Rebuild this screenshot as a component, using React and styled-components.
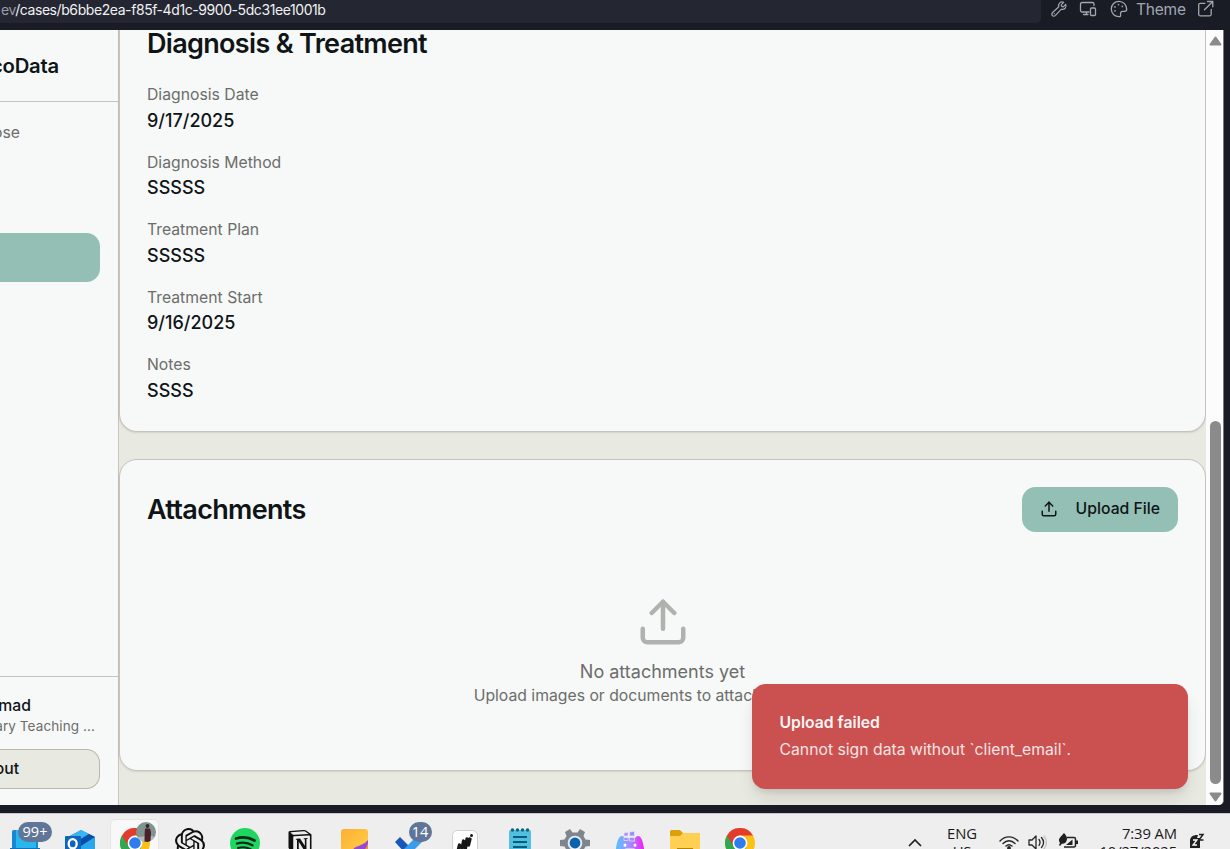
import React from "react";
import styled, { createGlobalStyle } from "styled-components";
import { Upload } from "lucide-react";
import { SiOpenai, SiNotion } from "react-icons/si";

const GlobalStyle = createGlobalStyle`
  * { box-sizing: border-box; }
  html, body { margin: 0; padding: 0; overflow: hidden; }
  body { font-family: Inter, "Liberation Sans", sans-serif; color: #0f1417; }
  svg { display: block; flex: none; }
`;

const Screen = styled.div`
  width: 1230px;
  height: 849px;
  display: flex;
  flex-direction: column;
  overflow: hidden;
  background: #191c25;
`;

/* Browser chrome */
const TopBar = styled.header`
  height: 30px;
  flex: none;
  display: flex;
  align-items: flex-start;
  color: #a2a6b1;
`;
const Address = styled.div`
  width: 1041px;
  height: 23px;
  background: #242731;
  border-bottom-right-radius: 5px;
  padding-left: 1px;
  font-size: 14px;
  line-height: 20px;
  letter-spacing: -0.42px;
  color: #f0f1f4;
  white-space: nowrap;
  span { color: #9a9da7; }
`;
const Tools = styled.div`
  display: flex;
  align-items: center;
  height: 18px;
  padding-left: 9px;
`;
const ToolIcon = styled.span`
  width: 18px;
  height: 18px;
  margin-right: ${(p) => p.$gap}px;
`;
const ThemeLabel = styled.span`
  width: 50px;
  margin: 2px 11px 0 -1px;
  font-size: 15.5px;
  letter-spacing: -0.2px;
  line-height: 18px;
  white-space: nowrap;
`;

/* Page */
const Page = styled.div`
  height: 775px;
  width: 1224px;
  flex: none;
  display: flex;
  overflow: hidden;
  background: #e8e9e0;
  border-right: 1px solid #767981;
  border-bottom-right-radius: 5px;
`;
const Sidebar = styled.aside`
  width: 119px;
  flex: none;
  display: flex;
  flex-direction: column;
  background: #f7f9f8;
  border-right: 1px solid #c8c3bd;
  overflow: hidden;
`;
const Clipped = styled.div`
  display: flex;
  justify-content: flex-end;
  width: ${(p) => p.$end}px;
  white-space: nowrap;
`;
const Brand = styled.div`
  height: 72px;
  flex: none;
  display: flex;
  align-items: center;
  border-bottom: 1px solid #c8c3bd;
  font-size: 20.25px;
  font-weight: 600;
  letter-spacing: -0.2px;
`;
const Nav = styled.nav`
  flex: 1;
  padding-top: 20px;
  font-size: 15.75px;
  line-height: 22.5px;
  color: #6c6d6a;
`;
const ActiveItem = styled.div`
  width: 100px;
  height: 49px;
  margin-top: 88.5px;
  background: #93bfb4;
  border-radius: 0 13.5px 13.5px 0;
`;
const Account = styled.div`
  height: 129px;
  flex: none;
  border-top: 1px solid #c8c3bd;
  padding-top: 18px;
`;
const UserName = styled.div`
  font-size: 15.75px;
  font-weight: 500;
  line-height: 22px;
`;
const UserOrg = styled.div`
  font-size: 13.5px;
  line-height: 18px;
  color: #6c6d6a;
  letter-spacing: 0.1px;
`;
const LogoutButton = styled.div`
  width: 100px;
  height: 40px;
  margin-top: 14px;
  padding-bottom: 2px;
  display: flex;
  align-items: center;
  background: #e8e9e0;
  border: 1px solid #bbb5ac;
  border-left: 0;
  border-radius: 0 13.5px 13.5px 0;
  font-size: 15.75px;
  font-weight: 500;
`;
const Main = styled.main`
  width: 1087px;
  flex: none;
  display: flex;
  flex-direction: column;
  gap: 27px;
`;
const Card = styled.section`
  background: #f7f9f8;
  border: 1px solid #c8c3bd;
  border-radius: 18px;
  padding: 27px;
  box-shadow: 0 1px 2px rgba(0, 0, 0, 0.1);
`;
const DiagnosisCard = styled(Card)`
  height: 402px;
  padding-top: 0;
  border-top: 0;
  border-top-left-radius: 0;
  border-top-right-radius: 0;
`;
const AttachmentsCard = styled(Card)`
  height: 312px;
`;
const Title = styled.h2`
  margin: 0;
  font-size: 27px;
  font-weight: 600;
  line-height: 27px;
  letter-spacing: -0.675px;
`;
const Fields = styled.div`
  display: flex;
  flex-direction: column;
  gap: 18px;
  margin-top: 27px;
`;
const FieldLabel = styled.div`
  font-size: 15.75px;
  line-height: 22.5px;
  color: #6c6d6a;
`;
const FieldValue = styled.div`
  font-size: 18px;
  font-weight: 500;
  line-height: 27px;
`;
const CardHeader = styled.div`
  display: flex;
  align-items: center;
  justify-content: space-between;
`;
const UploadButton = styled.button`
  width: 156px;
  height: 45px;
  border: 0;
  border-radius: 13.5px;
  padding: 0 18px;
  display: flex;
  align-items: center;
  justify-content: space-between;
  background: #93bfb4;
  color: #0f1417;
  font: 500 15.75px/22.5px Inter, sans-serif;
  white-space: nowrap;
  svg { margin-bottom: 1px; }
`;
const Empty = styled.div`
  display: flex;
  flex-direction: column;
  align-items: center;
  padding-top: 63px;
  color: #6c6d6a;
  svg { opacity: 0.5; margin-bottom: 9px; }
`;
const EmptyTitle = styled.div`
  font-size: 18px;
  line-height: 27px;
`;
const EmptyText = styled.div`
  font-size: 15.75px;
  line-height: 22.5px;
  white-space: nowrap;
`;
const ScrollBar = styled.div`
  width: 17px;
  flex: none;
  display: flex;
  flex-direction: column;
  align-items: center;
  background: #fcfcfc;
  padding: 6px 0 3px 2px;
`;
const Thumb = styled.div`
  width: 11px;
  height: 363px;
  margin: auto 0 8px;
  border-radius: 6px;
  background: #8b8b8b;
`;
const Toast = styled.div`
  position: absolute;
  left: 752px;
  top: 684px;
  width: 436px;
  height: 105px;
  padding: 28px 27.5px 27px;
  border-radius: 13.5px;
  background: #ca5150;
  color: #fbf5f4;
  font-size: 15.75px;
  line-height: 22.5px;
  box-shadow: 0 10px 18px -3px rgba(0, 0, 0, 0.12), 0 4px 7px -3px rgba(0, 0, 0, 0.12);
`;
const ToastTitle = styled.div`
  font-weight: 600;
  margin-bottom: 4.5px;
`;
const ToastText = styled.div`
  color: #f6e4e3;
`;

/* Desktop taskbar */
const Taskbar = styled.footer`
  height: 36px;
  margin-top: 8px;
  flex: none;
  display: flex;
  overflow: hidden;
  background: #eeeeee;
  border-top: 1px solid #c5c7ca;
  font-family: "Open Sans", "Noto Sans", sans-serif;
  color: #1b1b1b;
`;
const Apps = styled.div`
  display: flex;
  margin-left: -2.5px;
  width: 780px;
  flex: none;
`;
const AppCell = styled.div`
  position: relative;
  width: 55px;
  height: 50px;
  flex: none;
  padding: 14px 0 0 12.5px;
`;
const NotionCell = styled(AppCell)`
  padding: 16px 0 0 15.5px;
`;
const ActiveTile = styled(AppCell)`
  width: 49px;
  margin: 5px 4px 0 2px;
  padding: 8px 0 0 9.5px;
  background: #f8f8f8;
  border: 1px solid #e4e4e4;
  border-radius: 5px;
`;
const Badge = styled.span`
  position: absolute;
  left: ${(p) => p.$x}px;
  top: 8px;
  width: ${(p) => p.$w}px;
  height: 20px;
  border-radius: 10px;
  background: #5f7699;
  color: #fff;
  font-size: 14.5px;
  line-height: 20px;
  text-align: center;
`;
const Avatar = styled.span`
  position: absolute;
  left: 25px;
  top: 2px;
`;
const Tray = styled.div`
  display: flex;
  flex: 1;
  justify-content: flex-end;
  padding-right: 25px;
`;
const TrayIcon = styled.span`
  width: ${(p) => p.$w}px;
  margin-right: ${(p) => p.$gap}px;
  padding-top: 19px;
`;
const TrayText = styled.div`
  width: ${(p) => p.$w}px;
  margin-right: ${(p) => p.$gap}px;
  padding-top: 10px;
  font-size: 14.8px;
  line-height: 18px;
  letter-spacing: -0.1px;
  text-align: ${(p) => p.$align || "right"};
  white-space: nowrap;
`;

const Line = ({ children, width = 1.3 }) => (
  <svg width="18" height="18" viewBox="0 0 18 18" fill="none" stroke="currentColor" strokeWidth={width} strokeLinecap="round" strokeLinejoin="round">
    {children}
  </svg>
);

const Chrome = () => (
  <svg width="30" height="30" viewBox="0 0 30 30">
    <circle cx="15" cy="15" r="15" fill="#fbc116" />
    <path d="M15 15 2 7.5A15 15 0 0 0 15 30l6.5-11.2Z" fill="#2da94f" />
    <path d="M2 7.5A15 15 0 0 1 28 7.5H15l-6.5 11.2Z" fill="#e33b2e" />
    <circle cx="15" cy="15" r="7.4" fill="#fff" />
    <circle cx="15" cy="15" r="5.8" fill="#2f7cec" />
  </svg>
);
const Icon30 = ({ children }) => (
  <svg width="30" height="30" viewBox="0 0 30 30">{children}</svg>
);

const fields = [
  ["Diagnosis Date", "9/17/2025"],
  ["Diagnosis Method", "SSSSS"],
  ["Treatment Plan", "SSSSS"],
  ["Treatment Start", "9/16/2025"],
  ["Notes", "SSSS"],
];

export default function App() {
  return (
    <Screen>
      <GlobalStyle />
      <TopBar>
        <Address><span>ev</span>/cases/b6bbe2ea-f85f-4d1c-9900-5dc31ee1001b</Address>
        <Tools>
          <ToolIcon $gap={11}>
            <Line width={1.2}><path d="M15.700 4.300 13.200 6.800l-1.600-.400-.400-1.600 2.500-2.500C10.700 1 7.800 3.600 8.800 6.700L2.600 12.500c-2.200 2.200.700 5.100 2.900 2.900l5.800-6.200c3.100 1 5.700-1.900 4.400-4.900ZM4.300 13.700v0" /></Line>
          </ToolIcon>
          <ToolIcon $gap={13}>
            <Line><path d="M10 12H3a1.500 1.500 0 0 1-1.500-1.500V4A1.500 1.500 0 0 1 3 2.500h10.500A1.500 1.500 0 0 1 15 4v1.500M7.500 12v2.500M4.500 14.500H9" /><rect x="11.500" y="8" width="5" height="7.500" rx="1" /></Line>
          </ToolIcon>
          <ToolIcon $gap={9}>
            <Line><path d="M9 1.300a7.700 7.700 0 1 0 0 15.400c1.200 0 1.900-.700 1.600-1.800-.4-2 .3-3.600 2.100-3.600h2.100c1.200 0 1.900-.7 1.900-2.100 0-4.300-3.500-7.900-7.700-7.900Z" /><path d="M5 6.800v.1M8.500 4.500v.1M12.300 6.300v.1M5 10.800v.1" strokeWidth="1.700" /></Line>
          </ToolIcon>
          <ThemeLabel>Theme</ThemeLabel>
          <ToolIcon $gap={0}>
            <Line><path d="M8 3.300H3.200A1.500 1.500 0 0 0 1.700 4.800v9.500a1.500 1.500 0 0 0 1.500 1.500h9.500a1.500 1.500 0 0 0 1.500-1.500V9.500M10.500 1.500h5.300v5.300M15.500 1.800 7.500 9.800" /></Line>
          </ToolIcon>
        </Tools>
      </TopBar>

      <Page>
        <Sidebar>
          <Brand><Clipped $end={59}>coData</Clipped></Brand>
          <Nav>
            <Clipped $end={20}>ose</Clipped>
            <ActiveItem />
          </Nav>
          <Account>
            <UserName><Clipped $end={31}>mad</Clipped></UserName>
            <UserOrg><Clipped $end={95}>ary Teaching ...</Clipped></UserOrg>
            <LogoutButton><Clipped $end={19}>out</Clipped></LogoutButton>
          </Account>
        </Sidebar>
        <Main>
          <DiagnosisCard>
            <Title>Diagnosis &amp; Treatment</Title>
            <Fields>
              {fields.map(([label, value]) => (
                <div key={label}>
                  <FieldLabel>{label}</FieldLabel>
                  <FieldValue>{value}</FieldValue>
                </div>
              ))}
            </Fields>
          </DiagnosisCard>
          <AttachmentsCard>
            <CardHeader>
              <Title>Attachments</Title>
              <UploadButton><Upload size={18} strokeWidth={2} />Upload File</UploadButton>
            </CardHeader>
            <Empty>
              <Upload size={54} strokeWidth={2} />
              <EmptyTitle>No attachments yet</EmptyTitle>
              <EmptyText>Upload images or documents to attach to this case</EmptyText>
            </Empty>
          </AttachmentsCard>
        </Main>
        <ScrollBar>
          <svg width="13" height="10" viewBox="0 0 13 10"><path d="M6.500 1.500 11.500 8.500h-10Z" fill="#8b8b8b" stroke="#8b8b8b" strokeWidth="2" strokeLinejoin="round" /></svg>
          <Thumb />
          <svg width="13" height="10" viewBox="0 0 13 10"><path d="M6.500 8.500 11.500 1.500h-10Z" fill="#8b8b8b" stroke="#8b8b8b" strokeWidth="2" strokeLinejoin="round" /></svg>
        </ScrollBar>
      </Page>

      <Toast>
        <ToastTitle>Upload failed</ToastTitle>
        <ToastText>Cannot sign data without `client_email`.</ToastText>
      </Toast>

      <Taskbar>
        <Apps>
          <AppCell>
            <Icon30><rect x="2" y="2" width="26" height="19" rx="1.500" fill="#1689d4" /><rect x="6" y="2" width="20" height="19" fill="#29b5ed" /><path d="M0 20h30v8H0Z" fill="#1572b6" /></Icon30>
            <Badge $x={20.5} $w={34}>99+</Badge>
          </AppCell>
          <AppCell>
            <Icon30>
              <path d="M3 9 16 2l14 7v21H3Z" fill="#1b78d0" /><path d="M3 9 16 2l8 4L11 14Z" fill="#38b5f1" /><path d="m11 14 13-8 6 3-14 9Z" fill="#0b4daa" /><path d="m16 18 14-9v21H16Z" fill="#28a8ea" />
              <rect y="8" width="16" height="17" rx="1" fill="#0d65bd" /><ellipse cx="7.700" cy="15.800" rx="4" ry="4.700" fill="none" stroke="#fff" strokeWidth="2.300" />
            </Icon30>
          </AppCell>
          <ActiveTile>
            <Chrome />
            <Avatar>
              <svg width="20" height="20" viewBox="0 0 20 20"><circle cx="10" cy="10" r="10" fill="#80958f" /><path d="M1.500 15a10 10 0 0 0 17 0l-3-1Z" fill="#b5bab5" /><circle cx="11.500" cy="4" r="1.900" fill="#35262a" /><path d="M9 6.500h5l1 4-.500 8.500-3 1-3-.500.200-9Z" fill="#4b202b" /></svg>
            </Avatar>
          </ActiveTile>
          <AppCell><SiOpenai size={30} color="#101010" /></AppCell>
          <AppCell>
            <Icon30><circle cx="15" cy="15" r="15" fill="#1fd660" /><g fill="none" stroke="#10291a" strokeLinecap="round"><path d="M6 10.500c6-1.800 13-1.200 18.500 2" strokeWidth="2.700" /><path d="M7 15.500c5-1.500 11-.900 15.500 1.800" strokeWidth="2.300" /><path d="M8 20c4-1.200 9-.700 13 1.500" strokeWidth="2" /></g></Icon30>
          </AppCell>
          <NotionCell><SiNotion size={24} color="#111" /></NotionCell>
          <AppCell>
            <Icon30><defs><linearGradient id="sheet" x2="1" y2="1"><stop stopColor="#ffad32" /><stop offset="1" stopColor="#ffd54a" /></linearGradient></defs><rect x="1" y="1" width="27" height="28" rx="3" fill="url(#sheet)" /><path d="M28 12c-3 4-8 5-12 7-3 1-4 4-5 8h17Z" fill="#934bd0" /><path d="M22 25c3-4 6-7 6-11v14h-7Z" fill="#fa8e48" /></Icon30>
          </AppCell>
          <AppCell>
            <Icon30><path d="m0 14 5-5 11 11-6 5Z" fill="#1856b8" /><path d="m8 22 16-16 6 5-20 20Z" fill="#3b9eed" /></Icon30>
            <Badge $x={26} $w={23}>14</Badge>
          </AppCell>
          <AppCell>
            <Icon30><rect x="2.500" y="2.500" width="25" height="27" rx="5" fill="#fff" stroke="#cfcfcf" /><g fill="none" stroke="#181818" strokeWidth="3.300" strokeLinecap="round"><path d="m8.500 21 1-4M12 21l1.500-8M15.500 20l1.500-9M18.500 17l1.500-6" /></g><circle cx="21.500" cy="7.500" r="1.500" fill="#181818" /></Icon30>
          </AppCell>
          <AppCell>
            <Icon30><rect x="4" y="2" width="22" height="27" rx="1.500" fill="#52bfdf" /><path d="M8 9h14M8 14h14M8 19h14" stroke="#075c7c" strokeWidth="2" /><path d="M7.500 2v0M12.500 2v0M17.500 2v0M22.500 2v0" stroke="#11647e" strokeWidth="3.500" strokeLinecap="round" /></Icon30>
          </AppCell>
          <AppCell>
            <Icon30><path d="m10 1 2.500 3.500h5L20 1l5 3-1.500 4 2 3.500 4.500.500v6l-4.500.500-2 3.500 1.500 4-5 3-2.500-3.500h-5L10 29l-5-3 1.500-4-2-3.500L0 18v-6l4.500-.500 2-3.500L5 4Z" fill="#7e858e" /><circle cx="15" cy="15" r="7.300" fill="#e9edef" /><circle cx="15" cy="15" r="5.400" fill="#0862ae" /></Icon30>
          </AppCell>
          <AppCell>
            <Icon30><defs><linearGradient id="pad"><stop stopColor="#51c5ff" /><stop offset=".5" stopColor="#a88bff" /><stop offset="1" stopColor="#f318ef" /></linearGradient></defs><path d="M0 30C1 16 3 8 7 8c2 0 2 2 4 2h8c2 0 2-2 4-2 4 0 6 8 7 22Z" fill="url(#pad)" /><path d="m9 5 4-.700V8H9ZM14.500 4l5-.700V8h-5ZM9 9.500h4v3H9ZM14.500 9.500h5v3.800l-5-.500Z" fill="#9c8ff8" stroke="#e9e5ff" strokeWidth=".7" /><path d="M10 17v.2M20 17v.2M11 22h8" stroke="#fff" strokeWidth="3" strokeLinecap="round" /></Icon30>
          </AppCell>
          <AppCell>
            <Icon30><path d="M0 3.500A1.500 1.500 0 0 1 1.500 2H10l3 3h17v5H0Z" fill="#dda00d" /><path d="M0 8h10l3-3h17v25H0Z" fill="#ffd052" /><path d="M7 20h16v8H7Z" fill="#b88408" /></Icon30>
          </AppCell>
          <AppCell><Chrome /></AppCell>
        </Apps>
        <Tray>
          <TrayIcon $w={14} $gap={24}><svg width="14" height="18" viewBox="0 0 14 18" fill="none" stroke="#202020" strokeWidth="1.700"><path d="m1 13 6-6 6 6" /></svg></TrayIcon>
          <TrayText $w={32} $gap={21} $align="center">ENG<br />US</TrayText>
          <TrayIcon $w={20} $gap={9}><svg width="20" height="18" viewBox="0 0 20 18" fill="none" stroke="#252525" strokeWidth="1.400" strokeLinecap="round"><path d="M1 8c5-5.500 13-5.500 18 0M4 10.500c3.500-3.700 8.500-3.700 12 0M7 13c2-1.800 4-1.800 6 0" /><circle cx="10" cy="15" r="1.200" fill="#252525" /></svg></TrayIcon>
          <TrayIcon $w={20} $gap={10}><svg width="20" height="18" viewBox="0 0 20 18" fill="none" stroke="#252525" strokeWidth="1.300" strokeLinejoin="round" strokeLinecap="round"><path d="M1 7h3l4-4v13l-4-4H1ZM11 6.500c1.200 1.500 1.200 4 0 6M13.500 4.500c2.500 3 2.500 7 0 10" /><path d="M16 3c3 4 3 9 0 13" stroke="#c3c3c3" /></svg></TrayIcon>
          <TrayIcon $w={20} $gap={21}><svg width="20" height="18" viewBox="0 0 20 18"><path d="M9 4.500h7a1.500 1.500 0 0 1 1.500 1.500v6.500A1.500 1.500 0 0 1 16 14H6" fill="none" stroke="#202020" strokeWidth="1.500" /><path d="M18 7.500h2v3.500h-2ZM14.500 6.500V12H8ZM6 0c3 3 4 6 2 9-1 1.700-3 2-4 1.500L2 13l-1-1 1-2C-1 6 3 4 6 0Z" fill="#202020" /></svg></TrayIcon>
          <TrayText $w={78} $gap={11}>7:39 AM<br />10/27/2025</TrayText>
          <TrayIcon $w={17} $gap={0}><svg width="17" height="18" viewBox="0 0 17 18"><path d="M2 15V8c0-4 3-6 7-6h1l-1 3h3v10H0Z" fill="#202020" /><path d="M5 7h4l-4 5h4" fill="none" stroke="#fff" strokeWidth="1.300" /><path d="M11 1.500h4L11 7h4.500" fill="none" stroke="#202020" strokeWidth="1.500" /></svg></TrayIcon>
        </Tray>
      </Taskbar>
    </Screen>
  );
}
